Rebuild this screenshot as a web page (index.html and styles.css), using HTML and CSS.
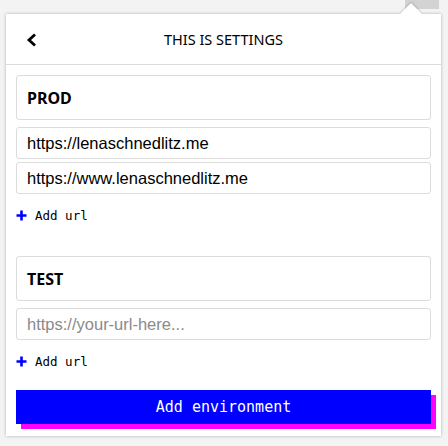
FILE: index.html
```html
<!DOCTYPE html>
<html>
<head>
<meta charset="utf-8">
<link rel="stylesheet" href="styles.css">
</head>
<body>
<div class="tab"></div>
<div class="popup">
  <header class="header">
    <svg class="back" width="12" height="14" viewBox="0 0 12 14"><polyline points="9,1.5 3,7 9,12.5" fill="none" stroke="#000" stroke-width="2.8"/></svg>
    <div class="title">THIS IS SETTINGS</div>
  </header>
  <main class="content">
    <section class="env">
      <div class="env-name">PROD</div>
      <div class="urls">
        <input class="url" value="https://lenaschnedlitz.me">
        <input class="url" value="https://www.lenaschnedlitz.me">
      </div>
      <div class="add-url">
        <svg width="11" height="11" viewBox="0 0 11 11"><path d="M5.5 0.5v10M0.5 5.5h10" stroke="#0000ff" stroke-width="2.6"/></svg>
        <span>Add url</span>
      </div>
    </section>
    <section class="env second">
      <div class="env-name">TEST</div>
      <div class="urls">
        <input class="url" placeholder="https://your-url-here...">
      </div>
      <div class="add-url">
        <svg width="11" height="11" viewBox="0 0 11 11"><path d="M5.5 0.5v10M0.5 5.5h10" stroke="#0000ff" stroke-width="2.6"/></svg>
        <span>Add url</span>
      </div>
    </section>
    <button class="add-env">Add environment</button>
  </main>
</div>
</body>
</html>
```
FILE: styles.css
```css
html, body {
  margin: 0;
  padding: 0;
}
body {
  background: #f3f3f3;
  width: 448px;
  height: 446px;
  padding: 14px 0 0 6px;
  box-sizing: border-box;
  position: relative;
  overflow: hidden;
}
.tab {
  position: absolute;
  top: 0;
  left: 405px;
  width: 34px;
  height: 9px;
  background: #d3d3d3;
}
.popup {
  position: relative;
  width: 435px;
  height: 422px;
  background: #fff;
  box-shadow: 0 0 3px rgba(0,0,0,0.28);
  box-sizing: border-box;
}
.popup::before {
  content: "";
  position: absolute;
  top: -11px;
  left: 405px;
  width: 15px;
  height: 15px;
  background: #fff;
  transform: rotate(45deg);
  transform-origin: 0 0;
  box-shadow: -1px -1px 2px rgba(0,0,0,0.15);
}
.header {
  height: 50px;
  border-bottom: 1px solid #dcdcdc;
  display: flex;
  align-items: center;
  justify-content: center;
  position: relative;
  background: #fff;
}
.back {
  position: absolute;
  left: 20px;
  top: 19px;
}
.title {
  font-family: "Noto Sans", sans-serif;
  font-size: 14.5px;
  color: #000;
  margin-left: 0;
}
.content {
  padding: 10px 10px 0 10px;
  display: flex;
  flex-direction: column;
}
.env {
  display: flex;
  flex-direction: column;
}
.env.second {
  margin-top: 31px;
}
.env-name {
  height: 45px;
  box-sizing: border-box;
  border: 1px solid #dcdcdc;
  border-radius: 3px;
  padding: 0 10px;
  display: flex;
  align-items: center;
  font-family: "Noto Sans", sans-serif;
  font-weight: bold;
  font-size: 16px;
  color: #000;
}
.urls {
  margin-top: 7px;
  display: flex;
  flex-direction: column;
  gap: 3px;
}
.url {
  height: 32px;
  box-sizing: border-box;
  border: 1px solid #dcdcdc;
  border-radius: 3px;
  padding: 0 10px;
  font-family: "Liberation Sans", Arial, sans-serif;
  font-size: 16.5px;
  color: #000;
  outline: none;
  margin: 0;
  width: 100%;
}
.url::placeholder {
  color: #8a8a8a;
}
.add-url {
  margin-top: 11px;
  height: 20px;
  display: flex;
  align-items: center;
  gap: 8px;
  font-family: "DejaVu Sans Mono", monospace;
  font-size: 12.5px;
  color: #000;
}
.add-env {
  margin-top: 19px;
  height: 34px;
  width: 415px;
  border: none;
  background: #0000ff;
  color: #fff;
  font-family: "DejaVu Sans Mono", monospace;
  font-size: 15px;
  box-shadow: 5px 5px 0 #ff00ff;
  padding: 0;
  cursor: pointer;
}
```
